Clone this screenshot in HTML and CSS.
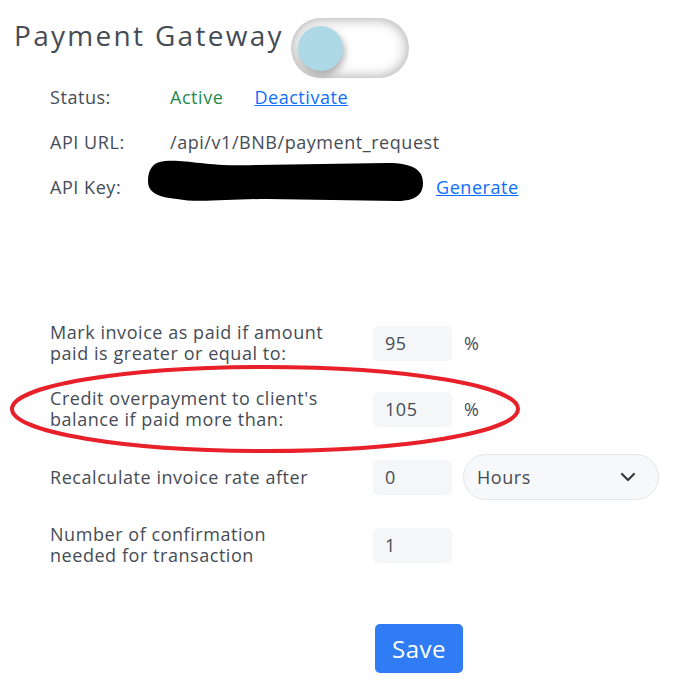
FILE: index.html
```html
<!DOCTYPE html>
<html lang="en">
<head>
<meta charset="utf-8">
<title>Payment Gateway</title>
<link rel="stylesheet" href="styles.css">
</head>
<body>
<div class="page">
  <div class="header">
    <h1 class="title">Payment Gateway</h1>
    <div class="toggle"><span class="knob"></span></div>
  </div>

  <div class="info">
    <div class="info-row">
      <span class="info-label">Status:</span>
      <span class="info-value status-active">Active</span>
      <a class="link" href="#">Deactivate</a>
    </div>
    <div class="info-row">
      <span class="info-label">API URL:</span>
      <span class="info-value">/api/v1/BNB/payment_request</span>
    </div>
    <div class="info-row key-row">
      <span class="info-label">API Key:</span>
      <svg class="redact" width="278" height="44" viewBox="0 0 278 44" aria-hidden="true">
        <path d="M18 2 C40 0 60 8 110 6 L240 4 C268 4 276 12 276 24 C276 36 268 42 250 42 L120 40 C80 40 50 44 30 40 C8 38 1 32 1 22 C1 10 6 3 18 2 Z" fill="#000"/>
      </svg>
      <a class="link" href="#">Generate</a>
    </div>
  </div>

  <div class="form">
    <div class="form-label">Mark invoice as paid if amount paid is greater or equal to:</div>
    <div class="form-field"><input class="num" type="text" value="95"><span class="unit">%</span></div>

    <div class="form-label">Credit overpayment to client's balance if paid more than:</div>
    <div class="form-field"><input class="num" type="text" value="105"><span class="unit">%</span></div>

    <div class="form-label">Recalculate invoice rate after</div>
    <div class="form-field">
      <input class="num" type="text" value="0">
      <div class="select">
        <span>Hours</span>
        <svg width="16" height="10" viewBox="0 0 16 10" aria-hidden="true"><path d="M2 2 L8 8 L14 2" fill="none" stroke="#343a40" stroke-width="2.2" stroke-linecap="round" stroke-linejoin="round"/></svg>
      </div>
    </div>

    <div class="form-label">Number of confirmation needed for transaction</div>
    <div class="form-field"><input class="num" type="text" value="1"></div>

    <div class="form-label"></div>
    <div class="form-field save-cell"><button class="save" type="button">Save</button></div>

    <svg class="highlight" width="520" height="92" viewBox="0 0 520 92" aria-hidden="true">
      <ellipse cx="261" cy="46" rx="253" ry="42" fill="none" stroke="#e8202a" stroke-width="4"/>
    </svg>
  </div>
</div>
</body>
</html>
```

FILE: styles.css
```css
* { box-sizing: border-box; }
html, body { margin: 0; padding: 0; background: #fff; }
body {
  font-family: "Open Sans", "DejaVu Sans", sans-serif;
  color: #454c56;
  font-size: 18px;
  letter-spacing: 0.55px;
}
.page { padding: 18px 0 0 14px; }

.header { display: flex; align-items: flex-start; }
.title {
  margin: 0;
  font-size: 28px;
  font-weight: 500;
  letter-spacing: 2.3px;
  color: #454c56;
  line-height: 34px;
}
.toggle {
  margin-left: 7px;
  width: 118px;
  height: 60px;
  border-radius: 30px;
  background: #fff;
  box-shadow: inset 0 0 14px rgba(0,0,0,0.38);
  display: flex;
  align-items: center;
  padding-left: 7px;
}
.knob {
  width: 45px;
  height: 45px;
  border-radius: 50%;
  background: #add8e6;
  box-shadow: 2px 4px 7px rgba(0,0,0,0.3);
}

.info { padding-left: 36px; margin-top: -4px; }
.info-row { display: flex; align-items: center; height: 45px; }
.info-label { width: 120px; }
.info-value { margin-right: 31px; }
.status-active { color: #1e8a4e; }
.link { color: #0d6efd; text-decoration: underline; }
.key-row .info-label { width: 97px; }
.redact { display: block; margin-right: 11px; margin-bottom: 12px; }

.form {
  position: relative;
  margin-top: 113px;
  padding-left: 36px;
  display: grid;
  grid-template-columns: 323px 1fr;
  row-gap: 24px;
}
.form-label { line-height: 21px; align-self: center; max-width: 282px; }
.form-field { display: flex; align-items: center; }
.num {
  width: 79px;
  height: 35px;
  border: none;
  border-radius: 5px;
  background: #f5f6f8;
  font-family: inherit;
  font-size: 18px;
  letter-spacing: 0.55px;
  color: #454c56;
  padding: 0 12px;
  outline: none;
}
.unit { margin-left: 12px; }
.select {
  margin-left: 11px;
  width: 196px;
  height: 46px;
  border: 1px solid #e3e5e9;
  border-radius: 23px;
  background: #f7f8fa;
  display: flex;
  align-items: center;
  justify-content: space-between;
  padding: 0 22px 0 13px;
}
.save-cell { margin-top: 34px; padding-left: 2px; }
.save {
  width: 88px;
  height: 49px;
  border: none;
  border-radius: 5px;
  background: #2f7cf5;
  color: #fff;
  font-family: inherit;
  font-size: 24px;
  letter-spacing: 0.5px;
}
.highlight { position: absolute; left: -10px; top: 41px; }
```
